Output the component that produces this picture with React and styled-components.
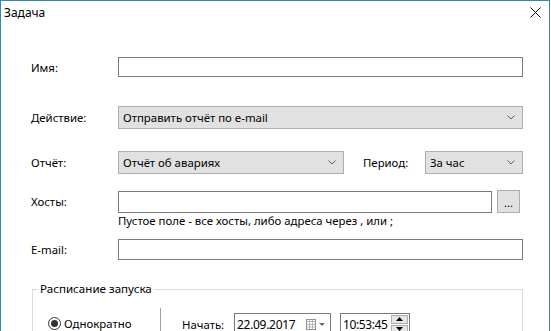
import React from 'react';
import styled, { createGlobalStyle } from 'styled-components';

const Global = createGlobalStyle`
  html, body {
    margin: 0;
    padding: 0;
    background: #ffffff;
    overflow: hidden;
  }
  body {
    font-family: "Noto Sans", "Open Sans", sans-serif;
    font-size: 11.4px;
    color: #000;
  }
`;

const Chevron = () => (
  <svg width="8" height="5" viewBox="0 0 8 5">
    <path d="M0.5 0.5 L4 4 L7.5 0.5" fill="none" stroke="#606060" strokeWidth="1" />
  </svg>
);

const App = () => {
  return (
    <>
      <Global />
      <Window>
        <TitleBar>
          <Title>Задача</Title>
          <CloseButton>
            <svg width="11" height="11" viewBox="0 0 11 11">
              <path d="M0.5 0.5 L10.5 10.5 M10.5 0.5 L0.5 10.5" stroke="#000" strokeWidth="1" />
            </svg>
          </CloseButton>
        </TitleBar>

        <Form>
          <Row $mt={27} $h={20}>
            <Label>Имя:</Label>
            <TextBox $w={405} />
          </Row>

          <Row $mt={29} $h={23}>
            <Label>Действие:</Label>
            <Combo $w={405}>
              <span>Отправить отчёт по e-mail</span>
              <Chevron />
            </Combo>
          </Row>

          <Row $mt={22} $h={23}>
            <Label>Отчёт:</Label>
            <Combo $w={226}>
              <span>Отчёт об авариях</span>
              <Chevron />
            </Combo>
            <SideLabel>Период:</SideLabel>
            <Combo $w={98}>
              <span>За час</span>
              <Chevron />
            </Combo>
          </Row>

          <Row $mt={16} $h={23}>
            <Label>Хосты:</Label>
            <TextBox $w={374} $h={22} />
            <DotsButton>...</DotsButton>
          </Row>
          <Hint>Пустое поле - все хосты, либо адреса через , или ;</Hint>

          <Row $mt={11} $h={21}>
            <Label>E-mail:</Label>
            <TextBox $w={405} $h={21} />
          </Row>

          <Group>
            <Legend>Расписание запуска</Legend>
            <GroupBody>
              <ModeColumn>
                <RadioItem>
                  <RadioDot $checked />
                  <span>Однократно</span>
                </RadioItem>
              </ModeColumn>
              <StartColumn>
                <StartLabel>Начать:</StartLabel>
                <DateBox>
                  <span>22.09.2017</span>
                  <CalendarButton>
                    <svg width="20" height="12" viewBox="0 0 20 12">
                      <rect x="0.5" y="1.5" width="9" height="10" fill="#fff" stroke="#8c8c8c" />
                      <path d="M0.5 3.5 H9.5 M3.5 1.5 V11.5 M6.5 1.5 V11.5 M0.5 6.5 H9.5 M0.5 9 H9.5" stroke="#b8b8b8" />
                      <path d="M13 5 H19 L16 8 Z" fill="#56708c" />
                    </svg>
                  </CalendarButton>
                </DateBox>
                <TimeBox>
                  <span>10:53:45</span>
                  <Spinner>
                    <SpinButton>
                      <svg width="7" height="4" viewBox="0 0 7 4"><path d="M0 4 L3.5 0 L7 4 Z" fill="#000" /></svg>
                    </SpinButton>
                    <SpinButton>
                      <svg width="7" height="4" viewBox="0 0 7 4"><path d="M0 0 L3.5 4 L7 0 Z" fill="#000" /></svg>
                    </SpinButton>
                  </Spinner>
                </TimeBox>
              </StartColumn>
            </GroupBody>
          </Group>
        </Form>
      </Window>
    </>
  );
};

const Window = styled.div`
  width: 548px;
  height: 331px;
  border: 1px solid #3a88a8;
  border-bottom: none;
  background: #ffffff;
  overflow: hidden;
  display: flex;
  flex-direction: column;
`;

const TitleBar = styled.div`
  height: 29px;
  display: flex;
  align-items: flex-start;
  justify-content: space-between;
  flex-shrink: 0;
`;

const Title = styled.div`
  margin: 4px 0 0 3px;
  font-size: 12px;
  line-height: 16px;
`;

const CloseButton = styled.div`
  width: 11px;
  height: 11px;
  margin: 6px 8px 0 0;
  display: flex;
`;

const Form = styled.div`
  padding-left: 30px;
  display: flex;
  flex-direction: column;
`;

const Row = styled.div`
  display: flex;
  align-items: center;
  height: ${p => p.$h}px;
  margin-top: ${p => p.$mt}px;
`;

const Label = styled.div`
  width: 87px;
  flex-shrink: 0;
`;

const SideLabel = styled.div`
  width: 62px;
  margin-left: 19px;
  flex-shrink: 0;
`;

const TextBox = styled.div`
  box-sizing: border-box;
  width: ${p => p.$w}px;
  height: ${p => p.$h || 20}px;
  border: 1px solid #7a7a7a;
  background: #fff;
`;

const Combo = styled.div`
  box-sizing: border-box;
  width: ${p => p.$w}px;
  height: 23px;
  border: 1px solid #adadad;
  background: #e1e1e1;
  display: flex;
  align-items: center;
  justify-content: space-between;
  padding: 0 7px 0 4px;
  white-space: nowrap;

  & svg {
    flex-shrink: 0;
  }
`;

const DotsButton = styled.div`
  box-sizing: border-box;
  width: 23px;
  height: 23px;
  margin-left: 5px;
  border: 1px solid #adadad;
  background: #e1e1e1;
  display: flex;
  align-items: center;
  justify-content: center;
  font-size: 11px;
  line-height: 1;
  padding-top: 2px;
`;

const Hint = styled.div`
  margin-left: 87px;
  height: 15px;
  line-height: 15px;
  white-space: nowrap;
`;

const Group = styled.fieldset`
  box-sizing: border-box;
  margin: 21px 0 0 1px;
  width: 491px;
  height: 90px;
  padding: 0;
  border: 1px solid #dcdcdc;
`;

const Legend = styled.legend`
  margin-left: 5px;
  padding: 0 2px;
  line-height: 16px;
  font-size: 11.6px;
`;

const GroupBody = styled.div`
  display: flex;
  margin-top: 11px;
`;

const ModeColumn = styled.div`
  width: 128px;
  padding: 4px 0 0 15px;
  box-sizing: border-box;
  border-right: 1px solid #a0a0a0;
  height: 60px;
`;

const RadioItem = styled.div`
  display: flex;
  align-items: center;
  gap: 3px;
  height: 22px;
`;

const RadioDot = styled.div`
  box-sizing: border-box;
  width: 13px;
  height: 13px;
  border-radius: 50%;
  border: 1px solid #333;
  background: #fff;
  display: flex;
  align-items: center;
  justify-content: center;

  &::after {
    content: '';
    width: 7px;
    height: 7px;
    border-radius: 50%;
    background: ${p => (p.$checked ? '#333' : 'transparent')};
  }
`;

const StartColumn = styled.div`
  display: flex;
  align-items: flex-start;
  padding: 5px 0 0 21px;
`;

const StartLabel = styled.div`
  width: 52px;
  line-height: 20px;
  margin-top: 2px;
`;

const DateBox = styled.div`
  box-sizing: border-box;
  width: 97px;
  height: 22px;
  border: 1px solid #7a7a7a;
  display: flex;
  align-items: center;
  justify-content: space-between;
  padding: 0 4px 0 2px;
  font-size: 12px;
  letter-spacing: -0.3px;
`;

const CalendarButton = styled.div`
  display: flex;
`;

const TimeBox = styled.div`
  box-sizing: border-box;
  width: 70px;
  height: 22px;
  margin-left: 9px;
  border: 1px solid #7a7a7a;
  display: flex;
  align-items: center;
  justify-content: space-between;
  padding: 0 1px 0 2px;
  font-size: 12px;
  letter-spacing: -0.4px;
`;

const Spinner = styled.div`
  display: flex;
  flex-direction: column;
  gap: 1px;
  align-self: stretch;
  padding: 1px 0;
`;

const SpinButton = styled.div`
  box-sizing: border-box;
  width: 17px;
  flex: 1;
  border: 1px solid #adadad;
  background: #e5e5e5;
  display: flex;
  align-items: center;
  justify-content: center;
`;

export default App;
